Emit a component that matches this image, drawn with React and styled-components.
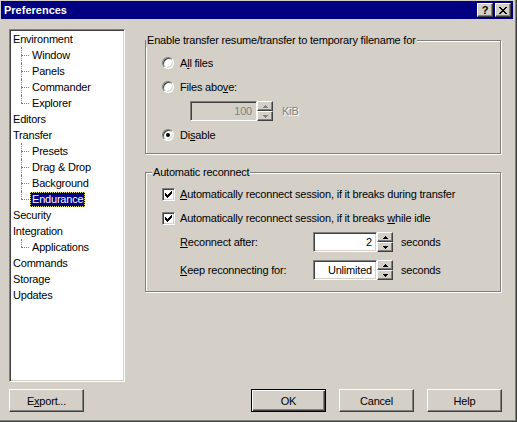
import React from 'react'
import styled, { createGlobalStyle, css } from 'styled-components'

const face = '#D4D0C8'
const shadow = '#808080'
const darkShadow = '#404040'
const navy = '#000080'

const GlobalStyle = createGlobalStyle`
  html, body { margin: 0; padding: 0; background: ${face}; }
  body {
    font-family: "Liberation Sans", Arial, sans-serif;
    font-size: 11px;
    letter-spacing: -0.2px;
    color: #000;
  }
  * { box-sizing: border-box; }
`

// classic 3d edges
const raisedEdge = css`
  border: 1px solid;
  border-color: #fff ${darkShadow} ${darkShadow} #fff;
  box-shadow: inset -1px -1px 0 ${shadow};
`

const sunkenEdge = css`
  border: 1px solid;
  border-color: ${shadow} #fff #fff ${shadow};
  box-shadow: inset 1px 1px 0 ${darkShadow}, inset -1px -1px 0 ${face};
`

const Window = styled.div`
  width: 517px;
  height: 422px;
  padding: 1px 3px 0 1px;
  border-right: 1px solid ${darkShadow};
  border-bottom: 1px solid ${darkShadow};
  box-shadow: inset -1px -1px 0 ${shadow};
  display: flex;
  flex-direction: column;
`

const TitleBar = styled.div`
  height: 18px;
  background: ${navy};
  display: flex;
  align-items: center;
  padding: 0 2px 0 3px;
  gap: 2px;
`

const Title = styled.div`
  flex: 1;
  color: #fff;
  font-weight: bold;
  font-size: 11px;
  letter-spacing: 0;
  line-height: 14px;
`

const CaptionButton = styled.div`
  width: 16px;
  height: 14px;
  background: ${face};
  ${raisedEdge};
  display: flex;
  align-items: center;
  justify-content: center;
  font-weight: bold;
  font-size: 11px;
  line-height: 10px;
`

const Main = styled.div`
  display: flex;
  gap: 20px;
  padding: 10px 12px 0 8px;
`

const Tree = styled.div`
  width: 116px;
  height: 353px;
  flex: none;
  background: #fff;
  ${sunkenEdge};
  padding: 1px;
`

const TreeRow = styled.div`
  height: 16px;
  display: flex;
  align-items: center;
`

const TreeLabel = styled.span`
  padding: 0 2px;
  line-height: 15px;
  white-space: nowrap;
  ${p => p.$selected && css`
    background: ${navy};
    color: #fff;
    outline: 1px dotted #e6e67a;
    outline-offset: -1px;
  `}
`

const Branch = styled.div`
  padding-left: 19px;
`

const Leaf = styled(TreeRow)`
  position: relative;

  &::before {
    content: '';
    position: absolute;
    left: -9px;
    top: 8px;
    width: 8px;
    border-top: 1px dotted ${shadow};
  }

  &::after {
    content: '';
    position: absolute;
    left: -9px;
    top: 0;
    height: ${p => (p.$last ? 8 : 16)}px;
    border-left: 1px dotted ${shadow};
  }
`

const Pages = styled.div`
  flex: 1;
  padding-top: 5px;
  display: flex;
  flex-direction: column;
  gap: 12px;
`

const GroupBox = styled.fieldset`
  margin: 0;
  padding: 0;
  min-width: 0;
  border: 1px solid ${shadow};
  box-shadow: inset 1px 1px 0 #fff, 1px 1px 0 #fff;
`

const GroupTitle = styled.legend`
  margin-left: ${p => p.$indent || 0}px;
  padding: 0 1px;
  line-height: 13px;
  background: ${face};
`

const GroupBody = styled.div`
  padding: ${p => p.$top}px 0 ${p => p.$bottom}px 16px;
`

const Row = styled.div`
  height: ${p => p.$h || 24}px;
  display: flex;
  align-items: center;
  padding-left: ${p => p.$indent || 0}px;
  white-space: nowrap;
`

const Key = styled.span`
  text-decoration: underline;
`

const Radio = styled.span`
  width: 12px;
  height: 12px;
  flex: none;
  margin-right: 6px;
  border-radius: 50%;
  background: #fff;
  border: 1px solid;
  border-color: ${shadow} #fff #fff ${shadow};
  box-shadow: inset 1px 1px 0 ${darkShadow}, inset -1px -1px 0 ${face};
  display: flex;
  align-items: center;
  justify-content: center;

  &::after {
    content: '';
    width: 4px;
    height: 4px;
    border-radius: 50%;
    background: ${p => (p.$checked ? '#000' : 'transparent')};
  }
`

const CheckBox = styled.span`
  width: 13px;
  height: 13px;
  flex: none;
  margin-right: 5px;
  background: #fff;
  ${sunkenEdge};
  display: flex;
  align-items: center;
  justify-content: center;
`

const SpinBox = styled.div`
  width: ${p => p.$w}px;
  height: 20px;
  flex: none;
  display: flex;
`

const SpinEdit = styled.div`
  flex: 1;
  ${sunkenEdge};
  background: ${p => (p.$disabled ? face : '#fff')};
  color: ${p => (p.$disabled ? shadow : '#000')};
  text-align: right;
  padding: 2px 4px 0 2px;
  line-height: 15px;
`

const SpinButtons = styled.div`
  width: 16px;
  display: flex;
  flex-direction: column;
`

const SpinButton = styled.div`
  flex: 1;
  background: ${face};
  ${raisedEdge};
  display: flex;
  align-items: center;
  justify-content: center;
  color: ${p => (p.$disabled ? shadow : '#000')};
`

const FieldLabel = styled.span`
  width: 133px;
  flex: none;
`

const Unit = styled.span`
  margin-left: ${p => p.$gap}px;
  color: ${p => (p.$disabled ? shadow : '#000')};
  text-shadow: ${p => (p.$disabled ? '1px 1px 0 #fff' : 'none')};
`

const Footer = styled.div`
  display: flex;
  gap: 13px;
  padding: 7px 11px 0 8px;
`

const Button = styled.div`
  width: 75px;
  height: 23px;
  background: ${face};
  display: flex;
  align-items: center;
  justify-content: center;
  ${p => (p.$default
    ? css`
      border: 1px solid #000;
      box-shadow: inset 1px 1px 0 #fff, inset -1px -1px 0 ${darkShadow}, inset -2px -2px 0 ${shadow};
    `
    : raisedEdge)}
  ${p => p.$push && 'margin-right: auto;'}
`

const CloseGlyph = () => (
  <svg width="8" height="7" viewBox="0 0 8 7" shapeRendering="crispEdges">
    <path
      fill="#000"
      d="M0 0h2v1H0zM6 0h2v1H6zM1 1h2v1H1zM5 1h2v1H5zM2 2h4v1H2zM3 3h2v1H3zM2 4h4v1H2zM1 5h2v1H1zM5 5h2v1H5zM0 6h2v1H0zM6 6h2v1H6z"
    />
  </svg>
)

const CheckGlyph = () => (
  <svg width="7" height="7" viewBox="0 0 7 7" shapeRendering="crispEdges">
    <path
      fill="#000"
      d="M0 2h1v3H0zM1 3h1v3H1zM2 4h1v3H2zM3 3h1v3H3zM4 2h1v3H4zM5 1h1v3H5zM6 0h1v3H6z"
    />
  </svg>
)

const Arrow = ({ down }) => (
  <svg width="5" height="3" viewBox="0 0 5 3" shapeRendering="crispEdges">
    <path
      fill="currentColor"
      d={down ? 'M0 0h5v1H0zM1 1h3v1H1zM2 2h1v1H2z' : 'M2 0h1v1H2zM1 1h3v1H1zM0 2h5v1H0z'}
    />
  </svg>
)

const Spinner = ({ value, width, disabled }) => (
  <SpinBox $w={width}>
    <SpinEdit $disabled={disabled}>{value}</SpinEdit>
    <SpinButtons>
      <SpinButton $disabled={disabled}><Arrow /></SpinButton>
      <SpinButton $disabled={disabled}><Arrow down /></SpinButton>
    </SpinButtons>
  </SpinBox>
)

const sections = [
  { label: 'Environment', children: ['Window', 'Panels', 'Commander', 'Explorer'] },
  { label: 'Editors' },
  { label: 'Transfer', children: ['Presets', 'Drag & Drop', 'Background', 'Endurance'] },
  { label: 'Security' },
  { label: 'Integration', children: ['Applications'] },
  { label: 'Commands' },
  { label: 'Storage' },
  { label: 'Updates' },
]

export default function App() {
  return (
    <>
      <GlobalStyle />
      <Window>
        <TitleBar>
          <Title>Preferences</Title>
          <CaptionButton>?</CaptionButton>
          <CaptionButton><CloseGlyph /></CaptionButton>
        </TitleBar>

        <Main>
          <Tree>
            {sections.map(s => (
              <React.Fragment key={s.label}>
                <TreeRow><TreeLabel>{s.label}</TreeLabel></TreeRow>
                {s.children && (
                  <Branch>
                    {s.children.map((c, i) => (
                      <Leaf key={c} $last={i === s.children.length - 1}>
                        <TreeLabel $selected={c === 'Endurance'}>{c}</TreeLabel>
                      </Leaf>
                    ))}
                  </Branch>
                )}
              </React.Fragment>
            ))}
          </Tree>

          <Pages>
            <GroupBox>
              <GroupTitle>Enable transfer resume/transfer to temporary filename for</GroupTitle>
              <GroupBody $top={4} $bottom={6}>
                <Row>
                  <Radio />
                  <span>A<Key>l</Key>l files</span>
                </Row>
                <Row>
                  <Radio />
                  <span>Files abo<Key>v</Key>e:</span>
                </Row>
                <Row $indent={28}>
                  <Spinner value="100" width={83} disabled />
                  <Unit $gap={9} $disabled>KiB</Unit>
                </Row>
                <Row>
                  <Radio $checked />
                  <span>Di<Key>s</Key>able</span>
                </Row>
              </GroupBody>
            </GroupBox>

            <GroupBox>
              <GroupTitle $indent={6}>Automatic reconnect</GroupTitle>
              <GroupBody $top={3} $bottom={5}>
                <Row>
                  <CheckBox><CheckGlyph /></CheckBox>
                  <span><Key>A</Key>utomatically reconnect session, if it breaks during transfer</span>
                </Row>
                <Row>
                  <CheckBox><CheckGlyph /></CheckBox>
                  <span>Automatically reconnect session, if it breaks <Key>w</Key>hile idle</span>
                </Row>
                <Row $indent={18}>
                  <FieldLabel><Key>R</Key>econnect after:</FieldLabel>
                  <Spinner value="2" width={80} />
                  <Unit $gap={8}>seconds</Unit>
                </Row>
                <Row $indent={18} $h={32}>
                  <FieldLabel><Key>K</Key>eep reconnecting for:</FieldLabel>
                  <Spinner value="Unlimited" width={80} />
                  <Unit $gap={8}>seconds</Unit>
                </Row>
              </GroupBody>
            </GroupBox>
          </Pages>
        </Main>

        <Footer>
          <Button $push>E<Key>x</Key>port...</Button>
          <Button $default>OK</Button>
          <Button>Cancel</Button>
          <Button>Help</Button>
        </Footer>
      </Window>
    </>
  )
}
